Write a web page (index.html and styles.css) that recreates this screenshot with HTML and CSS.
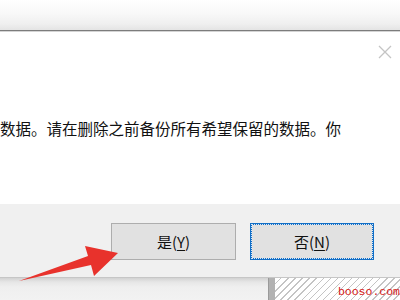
FILE: index.html
```html
<!DOCTYPE html>
<html lang="zh-CN">
<head>
<meta charset="utf-8">
<link rel="stylesheet" href="styles.css">
</head>
<body>
<div class="page">
  <div class="topbar"></div>
  <div class="topline"></div>
  <div class="dialog">
    <div class="content">
      <div class="close-row">
        <svg class="close" width="14" height="14" viewBox="0 0 14 14">
          <path d="M1 1 L13 13 M13 1 L1 13" stroke="#c4c4c4" stroke-width="1.3" fill="none"/>
        </svg>
      </div>
      <p class="message">数据。请在删除之前备份所有希望保留的数据。你</p>
    </div>
    <div class="buttons">
      <button class="btn">是(<u>Y</u>)</button>
      <button class="btn btn-default">否(<u>N</u>)</button>
    </div>
  </div>
  <div class="below">
    <div class="below-left"></div>
    <div class="below-bar"></div>
    <div class="below-hatch"><span class="watermark">booso.com</span></div>
  </div>
  <svg class="arrow" width="400" height="300" viewBox="0 0 400 300">
    <polygon points="19,281 88,256 85,246 118,253 94,276 91,265" fill="#e8322c"/>
  </svg>
</div>
</body>
</html>
```

FILE: styles.css
```css
html, body {
  margin: 0;
  padding: 0;
  background: #ffffff;
}

.page {
  position: relative;
  width: 400px;
  height: 300px;
  overflow: hidden;
  font-family: "Noto Sans CJK SC", "Noto Sans", sans-serif;
  display: flex;
  flex-direction: column;
}

.topbar {
  height: 30px;
  background: linear-gradient(#ffffff 0%, #f8f8f8 45%, #efefef 80%, #e4e4e4 100%);
}

.topline {
  height: 1px;
  background: #7c7c7c;
  border-bottom: 1px solid #d4d4d4;
}

.dialog {
  display: flex;
  flex-direction: column;
  background: #ffffff;
  border-bottom: 1px solid #c6c6c6;
}

.content {
  height: 172px;
  padding: 13px 8px 0 0;
  box-sizing: border-box;
}

.close-row {
  display: flex;
  justify-content: flex-end;
  height: 14px;
}

.close {
  display: block;
}

.message {
  margin: 59px 0 0 0;
  font-size: 15.5px;
  line-height: 20px;
  color: #111111;
  white-space: nowrap;
}

.buttons {
  height: 73px;
  box-sizing: border-box;
  background: #f0f0f0;
  display: flex;
  justify-content: flex-end;
  align-items: flex-start;
  gap: 14px;
  padding: 19px 26px 0 0;
}

.btn {
  position: relative;
  width: 125px;
  height: 37px;
  margin: 0;
  padding: 0;
  box-sizing: border-box;
  background: #e1e1e1;
  border: 1px solid #adadad;
  font-family: "Noto Sans CJK SC", "Noto Sans", sans-serif;
  font-size: 15px;
  color: #111111;
}

.btn u {
  text-decoration-thickness: 1px;
  text-underline-offset: 2px;
}

.btn-default {
  width: 124px;
  border: 2px solid #136fc6;
}

.btn-default::after {
  content: "";
  position: absolute;
  inset: -1px;
  border: 1px dotted #dfe8f2;
}

.below {
  flex: 1;
  display: flex;
}

.below-left {
  width: 278px;
  background: linear-gradient(#d2d2d2 0px, #e6e6e6 4px, #efefef 9px, #f2f2f2 100%);
}

.below-bar {
  width: 6px;
  background: #b2b2b2;
  border-left: 1px solid #9a9a9a;
}

.below-hatch {
  flex: 1;
  display: flex;
  align-items: flex-end;
  padding: 0 0 2px 63px;
  background-color: #fbfbfb;
  background-image: repeating-linear-gradient(-45deg, #ffffff 0px, #ffffff 4px, #c4c4c4 4px, #c4c4c4 5px);
}

.watermark {
  font-family: "Liberation Mono", monospace;
  font-size: 11.5px;
  line-height: 12px;
  color: #d41818;
  white-space: nowrap;
}

.arrow {
  position: absolute;
  left: 0;
  top: 0;
  pointer-events: none;
}
```
